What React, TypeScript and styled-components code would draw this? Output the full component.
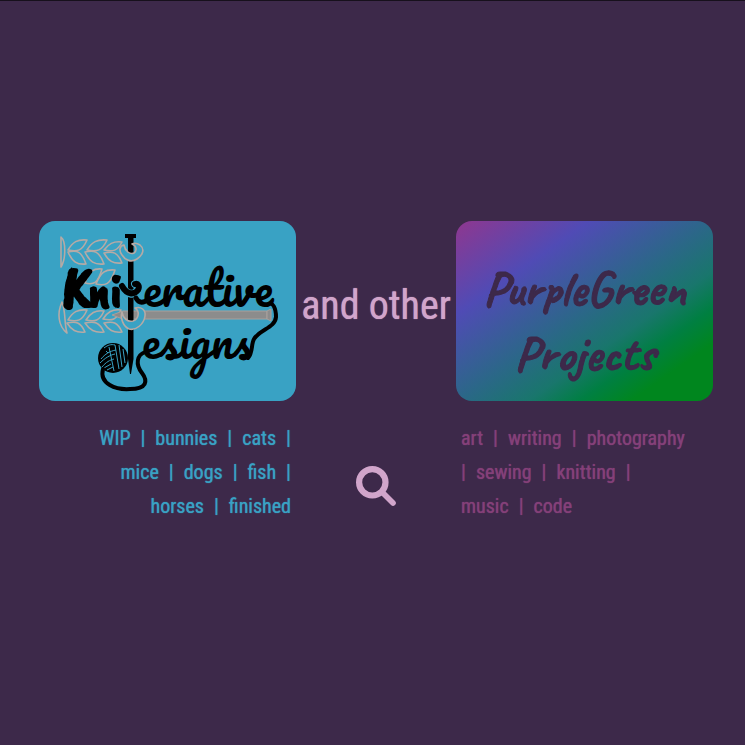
import React from "react";
import styled, { createGlobalStyle } from "styled-components";

const GlobalStyle = createGlobalStyle`
  *, *::before, *::after { box-sizing: border-box; }
  body {
    margin: 0;
    background: #3d294a;
    font-family: "Roboto Condensed", Roboto, "Liberation Sans", sans-serif;
  }
`;

const Page = styled.main`
  min-height: 100vh;
  border-top: 1px solid #17101c;
  padding: 0 0 2px 7px;
  display: flex;
  align-items: center;
  justify-content: center;
`;

const Layout = styled.div`
  display: grid;
  grid-template-columns: 257px 160px 257px;
  row-gap: 20px;
`;

const BrandCard = styled.a`
  display: block;
  height: 180px;
  border-radius: 16px;
  overflow: hidden;
  background: #39a2c4;
  color: #000;
`;

const ProjectsCard = styled.a`
  height: 180px;
  padding: 20px 0 0;
  border-radius: 16px;
  display: flex;
  flex-direction: column;
  align-items: center;
  justify-content: center;
  background: linear-gradient(to bottom right, #8f378f 0%, #504bb5 26%, #2b6788 50%, #19766c 64%, #007f42 74%, #00861e 84%, #00861e 100%);
  color: #3d294a;
  font-family: Caveat, "Caveat Brush", Lato, sans-serif;
  font-size: 50px;
  line-height: 65px;
  font-weight: 700;
  -webkit-text-stroke: 1px #3d294a;
  text-decoration: none;
`;

const Joiner = styled.p`
  margin: 0;
  padding-bottom: 10px;
  align-self: center;
  text-align: center;
  color: #d1a5cb;
  font-size: 40px;
  line-height: 48px;
  text-shadow: 0 0 1px currentColor;
  white-space: nowrap;
`;

const TagList = styled.nav<{ $color: string; $align: "left" | "right" }>`
  padding: 0 5px;
  color: ${(p) => p.$color};
  text-align: ${(p) => p.$align};
  font-size: 20px;
  line-height: 34px;
  text-shadow: 0 0 1px currentColor;
`;

const TagLine = styled.div`
  white-space: pre;
`;

const TagLink = styled.a`
  color: inherit;
  text-decoration: none;
`;

const Bar = styled.span`
  margin: 0 10px;

  &:first-child { margin-left: 0; }
  &:last-child { margin-right: 0; }
`;

const SearchButton = styled.button`
  align-self: center;
  justify-self: center;
  margin-top: 28px;
  padding: 0;
  border: 0;
  background: none;
  color: #d1a5cb;
  cursor: pointer;
`;

const SearchIcon = styled.svg`
  display: block;
  width: 40px;
  height: 40px;
  fill: none;
  stroke: currentColor;
  stroke-linecap: round;
`;

const Artwork = styled.svg`
  display: block;
  width: 100%;
  height: 100%;
`;

const Lettering = styled.text`
  fill: #000;
  font-family: Pacifico, Lato, sans-serif;
`;

const BrushLettering = styled.text`
  fill: #000;
  stroke: #000;
  stroke-width: 2px;
  font-family: "Caveat Brush", Caveat, Lato, sans-serif;
`;

const leaf = (x1: number, y1: number, x2: number, y2: number) => {
  const dx = (x2 - x1) / 4;
  const bend = y2 < y1 ? 1 : -1;
  return `M${x1} ${y1}C${x1 + dx} ${y2 + bend * 2} ${x2 - dx * 2} ${y2 - bend} ${x2} ${y2}C${x2 - dx} ${y1 + bend} ${x1 + dx * 2} ${y1 + bend * 2} ${x1} ${y1}Z`;
};

const leaves = [
  leaf(29, 29, 48, 19), leaf(48, 29, 68, 19), leaf(65, 29, 83, 21),
  leaf(29, 31, 47, 43), leaf(46, 31, 65, 43), leaf(65, 32, 83, 42),
  leaf(46, 62, 63, 48), leaf(57, 63, 76, 49),
  leaf(29, 99, 48, 89), leaf(47, 99, 65, 90), leaf(64, 98, 82, 89),
  leaf(28, 102, 46, 111), leaf(46, 102, 65, 111), leaf(65, 102, 83, 111),
];

const KnitterativeLogo = () => (
  <Artwork viewBox="0 0 257 180" role="img" aria-label="Knitterative Designs">
    <g fill="none" stroke="#b5aaa6" strokeWidth="1.6" strokeLinejoin="round">
      <path d="M22 16C27 20 27 38 22 46Z" />
      <path d="M23 81C18 92 19 105 28 112C25 102 27 91 23 81Z" />
      {leaves.map((d) => (
        <path key={d} d={d} />
      ))}
    </g>
    <path d="M73 94L84 90H228V98H84Z" fill="#8c8c8c" stroke="#a9a09c" strokeWidth="1" />
    <path d="M228 90L232 88V100L228 98Z" fill="#8c8c8c" stroke="#a9a09c" strokeWidth="1" />
    <path d="M86 13H97V17H94.500V138L92 153H91L89 138V17H86Z" fill="#000" />
    <g fill="#39a2c4" stroke="#b5aaa6" strokeWidth="1.6" strokeLinejoin="round">
      <path d="M85 24C80 25 80 30 83 34C86 39 92 42 98 38C104 34 106 28 101 24C98 22 95 22 93 23C98 25 98 30 95 32C91 34 86 30 85 24Z" />
      <path d="M83 91C81 97 84 105 90 108C97 110 105 103 106 95C107 89 102 85 96 87C101 90 100 98 94 100C89 101 84 98 83 91Z" />
    </g>
    <circle cx="74" cy="137" r="15" fill="#000" />
    <g fill="none" stroke="#39a2c4" strokeWidth="1">
      <path d="M62 138C66 133 71 130 77 129M61 142C66 137 71 134 76 133M63 146C67 141 71 139 75 138M65 127C69 124 72 123 76 124M76 124L80 148M80 124L83 146M84 128L86 142M70 126L75 150M67 130L69 132M65 147L72 143M68 149L74 146" />
    </g>
    <g fill="none" stroke="#000" strokeWidth="4" strokeLinecap="round" strokeLinejoin="round">
      <path d="M64 148C60 163 77 169 91 168C108 168 109 160 103 152C96 143 98 134 106 131" />
      <path d="M228 84C234 79 237 88 237 96C236 107 221 108 215 118C212 123 214 132 209 137" />
    </g>
    <BrushLettering x="23" y="86" fontSize="62">K</BrushLettering>
    <BrushLettering x="49" y="86" fontSize="50">ni</BrushLettering>
    <g fill="none" strokeLinecap="round">
      <path d="M84 66C88 75 96 74 99 69C101 65 99 62 96 63" stroke="#39a2c4" strokeWidth="8" />
      <path d="M83 65C88 74 95 74 99 69C101 65 99 62 96 63" stroke="#000" strokeWidth="6" />
      <path d="M97 77C100 83 105 82 109 78" stroke="#000" strokeWidth="5" />
    </g>
    <Lettering x="104" y="86" fontSize="46">erative</Lettering>
    <Lettering x="103" y="138" fontSize="45">esigns</Lettering>
  </Artwork>
);

const Tags = ({ lines }: { lines: string[] }) => (
  <>
    {lines.map((line) => (
      <TagLine key={line}>
        {line.split(" ").map((word, i) =>
          word === "|" ? <Bar key={i}>|</Bar> : <TagLink key={i} href={`#${word}`}>{word}</TagLink>
        )}
      </TagLine>
    ))}
  </>
);

export default function App() {
  return (
    <>
      <GlobalStyle />
      <Page>
        <Layout>
          <BrandCard href="#designs">
            <KnitterativeLogo />
          </BrandCard>
          <Joiner>and other</Joiner>
          <ProjectsCard href="#projects">
            <span>PurpleGreen</span>
            <span>Projects</span>
          </ProjectsCard>
          <TagList $color="#39a2c4" $align="right" aria-label="Designs">
            <Tags lines={["WIP | bunnies | cats |", "mice | dogs | fish |", "horses | finished"]} />
          </TagList>
          <SearchButton type="button" aria-label="Search">
            <SearchIcon viewBox="0 0 40 40" aria-hidden="true">
              <circle cx="16.300" cy="16.300" r="13.200" strokeWidth="6.200" />
              <path d="M26.500 26.500L37 37" strokeWidth="5.600" />
            </SearchIcon>
          </SearchButton>
          <TagList $color="#854079" $align="left" aria-label="Projects">
            <Tags lines={["art | writing | photography", "| sewing | knitting |", "music | code"]} />
          </TagList>
        </Layout>
      </Page>
    </>
  );
}
